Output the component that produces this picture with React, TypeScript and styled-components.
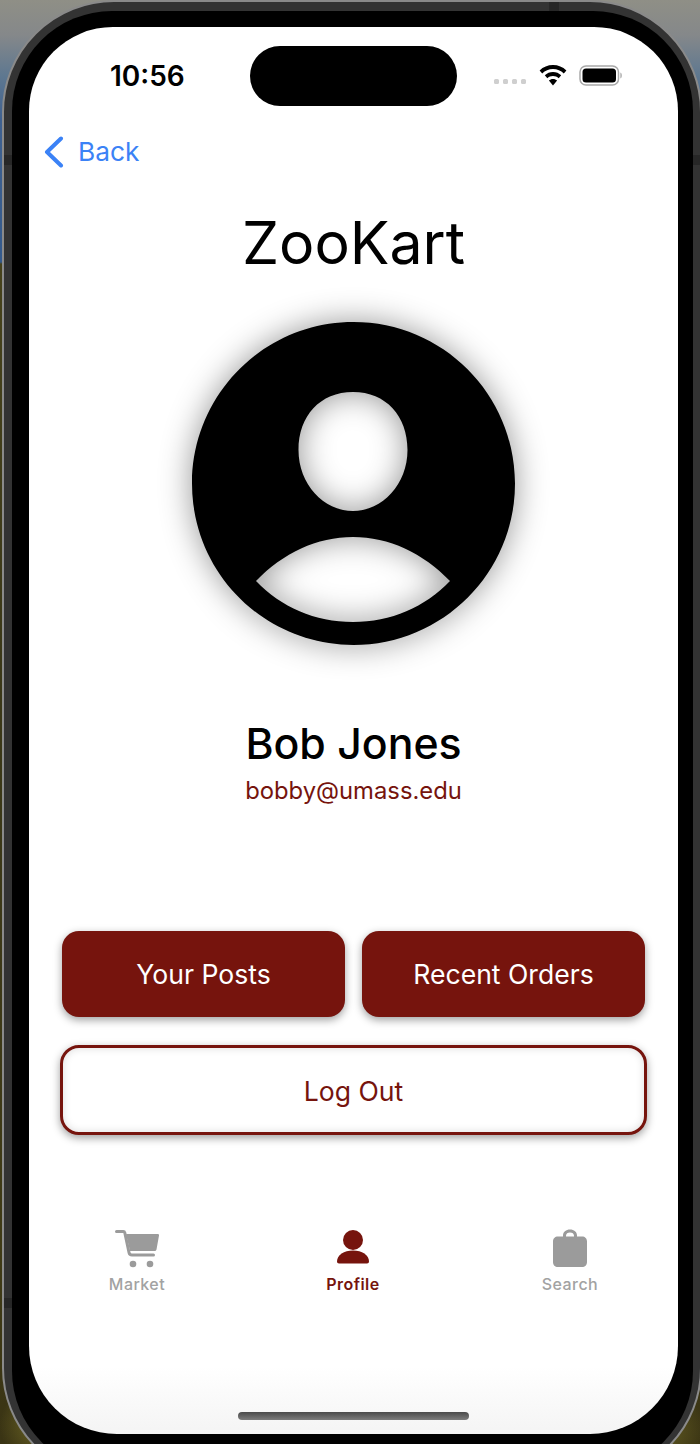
import React from "react";
import styled, { createGlobalStyle } from "styled-components";

const maroon = "#76140d";
const grey = "#9b9b9b";

const Global = createGlobalStyle`
  html, body { margin: 0; padding: 0; width: 700px; height: 1444px; overflow: hidden; }
  body {
    font-family: Inter, "Liberation Sans", sans-serif;
    background:
      radial-gradient(circle at 40px 1425px, #6b6424 0, rgba(107, 100, 36, 0) 40px),
      radial-gradient(circle at 665px 1430px, #5f5820 0, rgba(95, 88, 32, 0) 40px),
      linear-gradient(to bottom, #8f8f86 0, #85888a 35px, #5f7890 75px, #3f6190 120px, #345a8c 262px, #46421c 264px, #3a3718 700px, #3f3a16 1250px, #3a3414 1444px);
  }
`;

const Shell = styled.div`
  position: relative;
  box-sizing: border-box;
  width: 700px;
  height: 1480px;
  margin: 0 0 0 2px;
  padding: 9px 7px 0 8px;
  background: #333333;
  border: 2px solid #8a8a8a;
  border-radius: 112px;
`;

const AntennaV = styled.span<{ $side: "left" | "right"; $top: number }>`
  position: absolute;
  top: ${(p) => p.$top}px;
  ${(p) => (p.$side === "left" ? "left: 0;" : "left: 689px;")}
  width: 8px;
  height: 10px;
  background: #272727;
`;

const AntennaH = styled.span`
  position: absolute;
  top: 0;
  left: 545px;
  width: 10px;
  height: 9px;
  background: #272727;
`;

const Bezel = styled.div`
  box-sizing: border-box;
  width: 681px;
  height: 1460px;
  padding: 16px 15px 0 17px;
  background: #000;
  border-radius: 100px;
`;

const Screen = styled.div`
  position: relative;
  display: flex;
  flex-direction: column;
  width: 649px;
  height: 1407px;
  overflow: hidden;
  border-radius: 84px 84px 88px 88px;
  background: linear-gradient(to bottom, #fff 0, #fff 1340px, #f4f4f4 1407px);
`;

const Island = styled.div`
  position: absolute;
  top: 19px;
  left: 221px;
  width: 207px;
  height: 60px;
  border-radius: 30px;
  background: #000;
`;

const StatusBar = styled.div`
  display: flex;
  align-items: center;
  justify-content: space-between;
  height: 98px;
  padding: 0 55px 0 81px;
  box-sizing: border-box;
`;

const Time = styled.span`
  font-size: 28px;
  font-weight: 600;
  line-height: 34px;
  color: #000;
`;

const StatusIcons = styled.div`
  display: flex;
  align-items: center;
  gap: 12px;
  padding-bottom: 2px;
`;

const Dots = styled.div`
  display: flex;
  gap: 4px;
  margin: 12px 1px 0 0;
`;

const Dot = styled.span`
  width: 5px;
  height: 5px;
  border-radius: 1.5px;
  background: #cfcfcf;
`;

const BackRow = styled.div`
  display: flex;
  align-items: center;
  gap: 14px;
  height: 53px;
  padding: 0 0 1px 15px;
  color: #3b82f6;
  font-size: 26.3px;
`;

const Title = styled.h1`
  margin: 18px 0 0;
  height: 92px;
  font-size: 59px;
  font-weight: 400;
  line-height: 92px;
  text-align: center;
  color: #000;
`;

const AvatarWrap = styled.div`
  display: flex;
  justify-content: center;
  margin-top: 33px;
`;

const AvatarSvg = styled.svg`
  display: block;
  filter: drop-shadow(0 0 16px rgba(0, 0, 0, 0.42));
`;

const Name = styled.div`
  margin-top: 70px;
  height: 58px;
  line-height: 58px;
  font-size: 42.8px;
  font-weight: 500;
  text-align: center;
  color: #000;
`;

const Email = styled.div`
  height: 36px;
  line-height: 36px;
  font-size: 23.8px;
  text-align: center;
  color: ${maroon};
`;

const Actions = styled.div`
  display: flex;
  flex-direction: column;
  gap: 28px;
  margin-top: 122px;
  padding: 0 31px;
`;

const ButtonRow = styled.div`
  display: flex;
  gap: 17px;
  padding: 0 2px;
`;

const PrimaryButton = styled.button`
  flex: 1;
  height: 86px;
  padding: 0;
  border: 0;
  border-radius: 17px;
  background: ${maroon};
  color: #fff;
  font: 400 26.6px Inter, "Liberation Sans", sans-serif;
  box-shadow: 0 3px 8px rgba(0, 0, 0, 0.38);
`;

const OutlineButton = styled.button`
  box-sizing: border-box;
  width: 587px;
  height: 90px;
  padding: 1px 0 0;
  border: 3px solid ${maroon};
  border-radius: 19px;
  background: #fff;
  color: ${maroon};
  font: 400 26.6px Inter, "Liberation Sans", sans-serif;
  box-shadow: 0 3px 8px rgba(0, 0, 0, 0.38), inset 0 0 8px rgba(0, 0, 0, 0.14);
`;

const TabBar = styled.nav`
  display: grid;
  grid-template-columns: 216px 216px 218px;
  margin-top: 94px;
`;

const Tab = styled.div<{ $active?: boolean }>`
  display: flex;
  flex-direction: column;
  align-items: center;
  color: ${(p) => (p.$active ? maroon : grey)};
`;

const TabIcon = styled.svg`
  display: block;
  height: 40px;
`;

const TabLabel = styled.span<{ $active?: boolean }>`
  margin-top: 5px;
  line-height: 20px;
  font-size: 16px;
  font-weight: ${(p) => (p.$active ? 600 : 500)};
  letter-spacing: 0.45px;
  color: ${(p) => (p.$active ? maroon : "#a2a2a2")};
`;

const HomeIndicator = styled.div`
  position: absolute;
  left: 209px;
  bottom: 14px;
  width: 231px;
  height: 8px;
  border-radius: 4px;
  background: linear-gradient(to bottom, #4a4a4a, #7d7d7d);
`;

export default function App() {
  return (
    <>
      <Global />
      <Shell>
        <AntennaH />
        <AntennaV $side="left" $top={153} />
        <AntennaV $side="right" $top={153} />
        <AntennaV $side="left" $top={1296} />
        <Bezel>
          <Screen>
            <Island />
            <StatusBar>
              <Time>10:56</Time>
              <StatusIcons>
                <Dots>
                  <Dot />
                  <Dot />
                  <Dot />
                  <Dot />
                </Dots>
                <svg width="28" height="21" viewBox="0 0 28 21">
                  <path d="M14 0C8.800 0 4.200 2 .6 5.400L3.200 8.400C6.100 5.600 9.800 4 14 4s7.900 1.600 10.800 4.400l2.600-3C23.800 2 19.200 0 14 0z" fill="#000" />
                  <path d="M14 7c-3.200 0-6 1.200-8.200 3.300l2.500 2.900C9.800 11.800 11.800 11 14 11s4.200.8 5.700 2.200l2.500-2.900C20 8.200 17.200 7 14 7z" fill="#000" />
                  <path d="M14 14c-1.600 0-3 .6-4.100 1.600L14 20.500l4.100-4.900C17 14.600 15.600 14 14 14z" fill="#000" />
                </svg>
                <svg width="44" height="21" viewBox="0 0 44 21">
                  <rect x="1" y="1" width="38.500" height="19" rx="6" fill="#fff" stroke="#a8a8a8" strokeWidth="1.500" />
                  <rect x="3.500" y="3.500" width="33.500" height="14" rx="3.500" fill="#000" />
                  <path d="M41.500 7.500c1.500.5 1.500 5.500 0 6z" fill="#8f8f8f" />
                </svg>
              </StatusIcons>
            </StatusBar>
            <BackRow>
              <svg width="20" height="32" viewBox="0 0 20 32" fill="none">
                <path d="M17 2.500 3 16l14 13.500" stroke="#3b82f6" strokeWidth="4" strokeLinecap="round" strokeLinejoin="round" />
              </svg>
              <span>Back</span>
            </BackRow>
            <Title>ZooKart</Title>
            <AvatarWrap>
              <AvatarSvg width="323" height="323" viewBox="0 0 323 323">
                <path
                  fillRule="evenodd"
                  fill="#000"
                  d="M161.500 0C250.700 0 323 72.300 323 161.500S250.700 323 161.500 323 0 250.700 0 161.500 72.300 0 161.500 0ZM161 70c-33 0-54.500 24-54.500 58 0 34 25 61 54.500 61s54.500-27 54.500-61c0-34-21.500-58-54.500-58ZM161 215c-36 0-70 16-97 44 25 26 59 41 97 41s72-15 97-41c-27-28-61-44-97-44Z"
                />
              </AvatarSvg>
            </AvatarWrap>
            <Name>Bob Jones</Name>
            <Email>bobby@umass.edu</Email>
            <Actions>
              <ButtonRow>
                <PrimaryButton>Your Posts</PrimaryButton>
                <PrimaryButton>Recent Orders</PrimaryButton>
              </ButtonRow>
              <OutlineButton>Log Out</OutlineButton>
            </Actions>
            <TabBar>
              <Tab>
                <TabIcon width="44" viewBox="0 0 44 40" fill="none">
                  <path d="M1.500 2.500H8.300c.8 0 1.300.5 1.500 1.300l4.200 19.700c.3 1.700 1.200 2.500 3 2.500H38.500" stroke="currentColor" strokeWidth="3" strokeLinecap="round" strokeLinejoin="round" />
                  <path d="M11 5h31.800c1 0 1.400.6 1.200 1.500L41.500 20.500c-.2.900-.8 1.500-1.800 1.500H15z" fill="currentColor" />
                  <circle cx="18" cy="35" r="3.300" fill="currentColor" />
                  <circle cx="35" cy="35" r="3.300" fill="currentColor" />
                </TabIcon>
                <TabLabel>Market</TabLabel>
              </Tab>
              <Tab $active>
                <TabIcon width="34" viewBox="0 0 34 40">
                  <circle cx="17" cy="11" r="10" fill="currentColor" />
                  <path d="M1 32.500C1 26 8 21.500 17 21.500S33 26 33 32.500c0 1.300-.8 2-2 2H3c-1.200 0-2-.7-2-2Z" fill="currentColor" />
                </TabIcon>
                <TabLabel $active>Profile</TabLabel>
              </Tab>
              <Tab>
                <TabIcon width="34" viewBox="0 0 34 40">
                  <path
                    fillRule="evenodd"
                    fill="currentColor"
                    d="M10 7.500V6.500C10 3 13 .5 17 .5S24 3 24 6.500V7.500H29c3 0 5 2 5 5V33c0 3-2 5-5 5H5c-3 0-5-2-5-5V12.500c0-3 2-5 5-5ZM13 7.500H21V6.800C21 4.700 19.300 3.500 17 3.500S13 4.700 13 6.800Z"
                  />
                </TabIcon>
                <TabLabel>Search</TabLabel>
              </Tab>
            </TabBar>
            <HomeIndicator />
          </Screen>
        </Bezel>
      </Shell>
    </>
  );
}
